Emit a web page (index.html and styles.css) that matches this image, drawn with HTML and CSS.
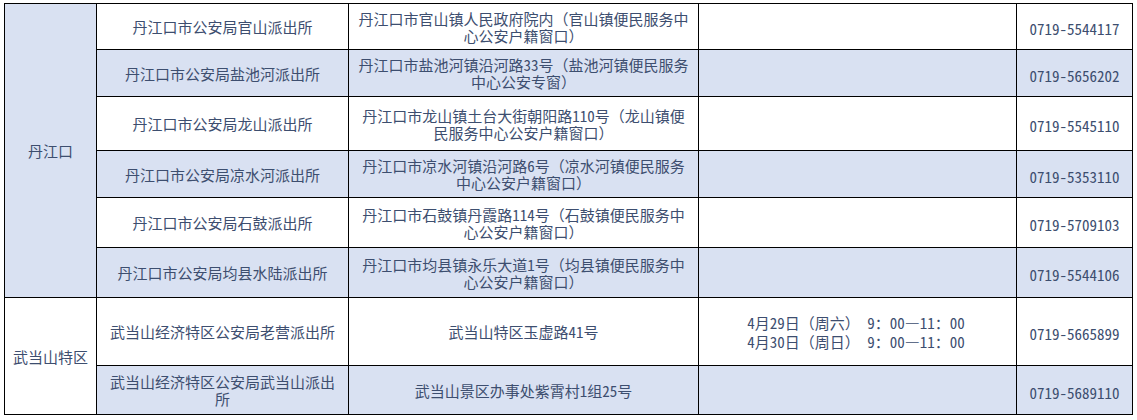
FILE: index.html
```html
<!DOCTYPE html>
<html lang="zh-CN">
<head>
<meta charset="utf-8">
<title>派出所户籍窗口</title>
<link rel="stylesheet" href="styles.css">
</head>
<body>
<div class="page">
<table class="grid">
  <colgroup>
    <col class="c-area"><col class="c-name"><col class="c-addr"><col class="c-time"><col class="c-tel">
  </colgroup>
  <tbody>
    <tr class="h46">
      <td class="area shade" rowspan="6">丹江口</td>
      <td>丹江口市公安局官山派出所</td>
      <td class="addr">丹江口市官山镇人民政府院内（官山镇便民服务中<br>心公安户籍窗口）</td>
      <td></td>
      <td class="tel">0719-5544117</td>
    </tr>
    <tr class="h47 shade">
      <td>丹江口市公安局盐池河派出所</td>
      <td class="addr">丹江口市盐池河镇沿河路33号（盐池河镇便民服务<br>中心公安专窗）</td>
      <td></td>
      <td class="tel">0719-5656202</td>
    </tr>
    <tr class="h54">
      <td>丹江口市公安局龙山派出所</td>
      <td class="addr">丹江口市龙山镇土台大街朝阳路110号（龙山镇便<br>民服务中心公安户籍窗口）</td>
      <td></td>
      <td class="tel">0719-5545110</td>
    </tr>
    <tr class="h47 shade">
      <td>丹江口市公安局凉水河派出所</td>
      <td class="addr">丹江口市凉水河镇沿河路6号（凉水河镇便民服务<br>中心公安户籍窗口）</td>
      <td></td>
      <td class="tel">0719-5353110</td>
    </tr>
    <tr class="h50">
      <td>丹江口市公安局石鼓派出所</td>
      <td class="addr">丹江口市石鼓镇丹霞路114号（石鼓镇便民服务中<br>心公安户籍窗口）</td>
      <td></td>
      <td class="tel">0719-5709103</td>
    </tr>
    <tr class="h50 shade">
      <td>丹江口市公安局均县水陆派出所</td>
      <td class="addr">丹江口市均县镇永乐大道1号（均县镇便民服务中<br>心公安户籍窗口）</td>
      <td></td>
      <td class="tel">0719-5544106</td>
    </tr>
    <tr class="h68">
      <td class="area" rowspan="2">武当山特区</td>
      <td>武当山经济特区公安局老营派出所</td>
      <td>武当山特区玉虚路41号</td>
      <td class="time">4月29日（周六） 9：00—11：00<br>4月30日（周日） 9：00—11：00</td>
      <td class="tel">0719-5665899</td>
    </tr>
    <tr class="h49 shade">
      <td>武当山经济特区公安局武当山派出<br>所</td>
      <td>武当山景区办事处紫霄村1组25号</td>
      <td></td>
      <td class="tel">0719-5689110</td>
    </tr>
  </tbody>
</table>
</div>
</body>
</html>
```

FILE: styles.css
```css
html, body {
  margin: 0;
  padding: 0;
  background: #ffffff;
}

.page {
  padding: 3px 0 0 4px;
}

.grid {
  border-collapse: collapse;
  table-layout: fixed;
  width: 1128px;
  font-family: "Noto Sans Mono CJK SC", "Noto Sans CJK SC", sans-serif;
  font-size: 15px;
  line-height: 17px;
  color: #3d4e6f;
}

.c-area { width: 92px; }
.c-name { width: 252px; }
.c-addr { width: 350px; }
.c-time { width: 318px; }
.c-tel { width: 116px; }

.grid td {
  border: 1px solid #000000;
  padding: 0 3px;
  text-align: center;
  vertical-align: middle;
  white-space: nowrap;
}

.shade td,
td.shade {
  background: #d9e1f2;
}

.h46 { height: 46px; }
.h47 { height: 47px; }
.h49 { height: 49px; }
.h50 { height: 50px; }
.h54 { height: 54px; }
.h68 { height: 68px; }

.grid td.tel {
  padding-top: 4px;
}

.grid td.time {
  line-height: 19px;
  padding-left: 0;
}
```
